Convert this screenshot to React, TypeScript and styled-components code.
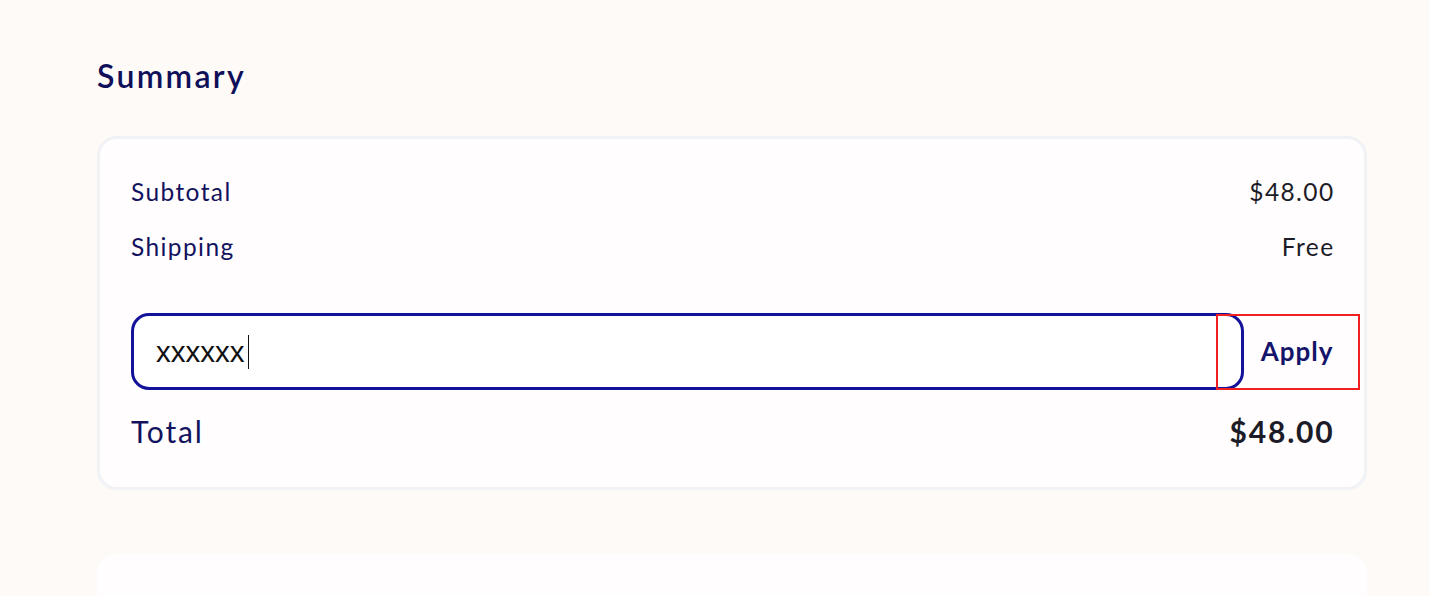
import * as React from 'react'
import styled, { createGlobalStyle } from 'styled-components'

const GlobalStyle = createGlobalStyle`
  html, body {
    margin: 0;
    padding: 0;
    background: #fefaf7;
    font-family: Lato, "Noto Sans", sans-serif;
  }
`

const Page = styled.div`
  padding: 56px 63px 0 97px;
  height: 596px;
  box-sizing: border-box;
  overflow: hidden;
`

const Heading = styled.h2`
  margin: 0 0 40px;
  font-size: 32px;
  line-height: 40px;
  font-weight: 600;
  letter-spacing: 2.3px;
  color: #0f0f5a;
`

const Card = styled.section`
  background: #fffdfd;
  border: 3px solid #f1f2f5;
  border-radius: 20px;
  padding: 36px 31px 36px;
  display: flex;
  flex-direction: column;
`

const Row = styled.div<{ $big?: boolean }>`
  display: flex;
  justify-content: space-between;
  align-items: center;
  font-size: ${p => (p.$big ? '30px' : '24.5px')};
  letter-spacing: ${p => (p.$big ? '1.8px' : '1.4px')};
  line-height: ${p => (p.$big ? '40px' : '33px')};
  & + & {
    margin-top: 22px;
  }
`

const Label = styled.span`
  color: #12125e;
`

const Value = styled.span<{ $strong?: boolean }>`
  color: #1c1c28;
  font-weight: ${p => (p.$strong ? 700 : 400)};
  margin-right: -1.5px;
`

const PromoRow = styled.div`
  display: flex;
  align-items: stretch;
  margin: 50px 0 21px;
`

const Field = styled.label`
  flex: 1;
  height: 77px;
  box-sizing: border-box;
  border: 3px solid #12129a;
  border-radius: 18px;
  display: flex;
  align-items: center;
  padding-left: 22px;
  background: #fff;
`

const Input = styled.input`
  border: 0;
  outline: none;
  padding: 0;
  width: 91px;
  font-family: "Liberation Sans", Arial, sans-serif;
  font-size: 29.5px;
  color: #111;
  background: transparent;
  caret-color: transparent;
`

const Caret = styled.span`
  width: 1px;
  height: 34px;
  background: #111;
  margin-left: 1px;
`

const ApplyButton = styled.button`
  width: 144px;
  margin: 1px -27px 0 -28px;
  padding: 0 0 2px 18px;
  border: 2px solid #f02020;
  background: transparent;
  font-family: Lato, "Noto Sans", sans-serif;
  font-size: 26px;
  font-weight: 700;
  letter-spacing: 1px;
  color: #14146a;
  cursor: pointer;
  position: relative;
`

const NextCard = styled.div`
  margin-top: 64px;
  height: 80px;
  background: #fffdfd;
  border-radius: 20px;
`

export default function App() {
  return (
    <Page>
      <GlobalStyle />
      <Heading>Summary</Heading>
      <Card>
        <Row>
          <Label>Subtotal</Label>
          <Value>$48.00</Value>
        </Row>
        <Row>
          <Label>Shipping</Label>
          <Value>Free</Value>
        </Row>
        <PromoRow>
          <Field>
            <Input defaultValue="xxxxxx" aria-label="Promo code" />
            <Caret />
          </Field>
          <ApplyButton type="button">Apply</ApplyButton>
        </PromoRow>
        <Row $big>
          <Label>Total</Label>
          <Value $strong>$48.00</Value>
        </Row>
      </Card>
      <NextCard />
    </Page>
  )
}
